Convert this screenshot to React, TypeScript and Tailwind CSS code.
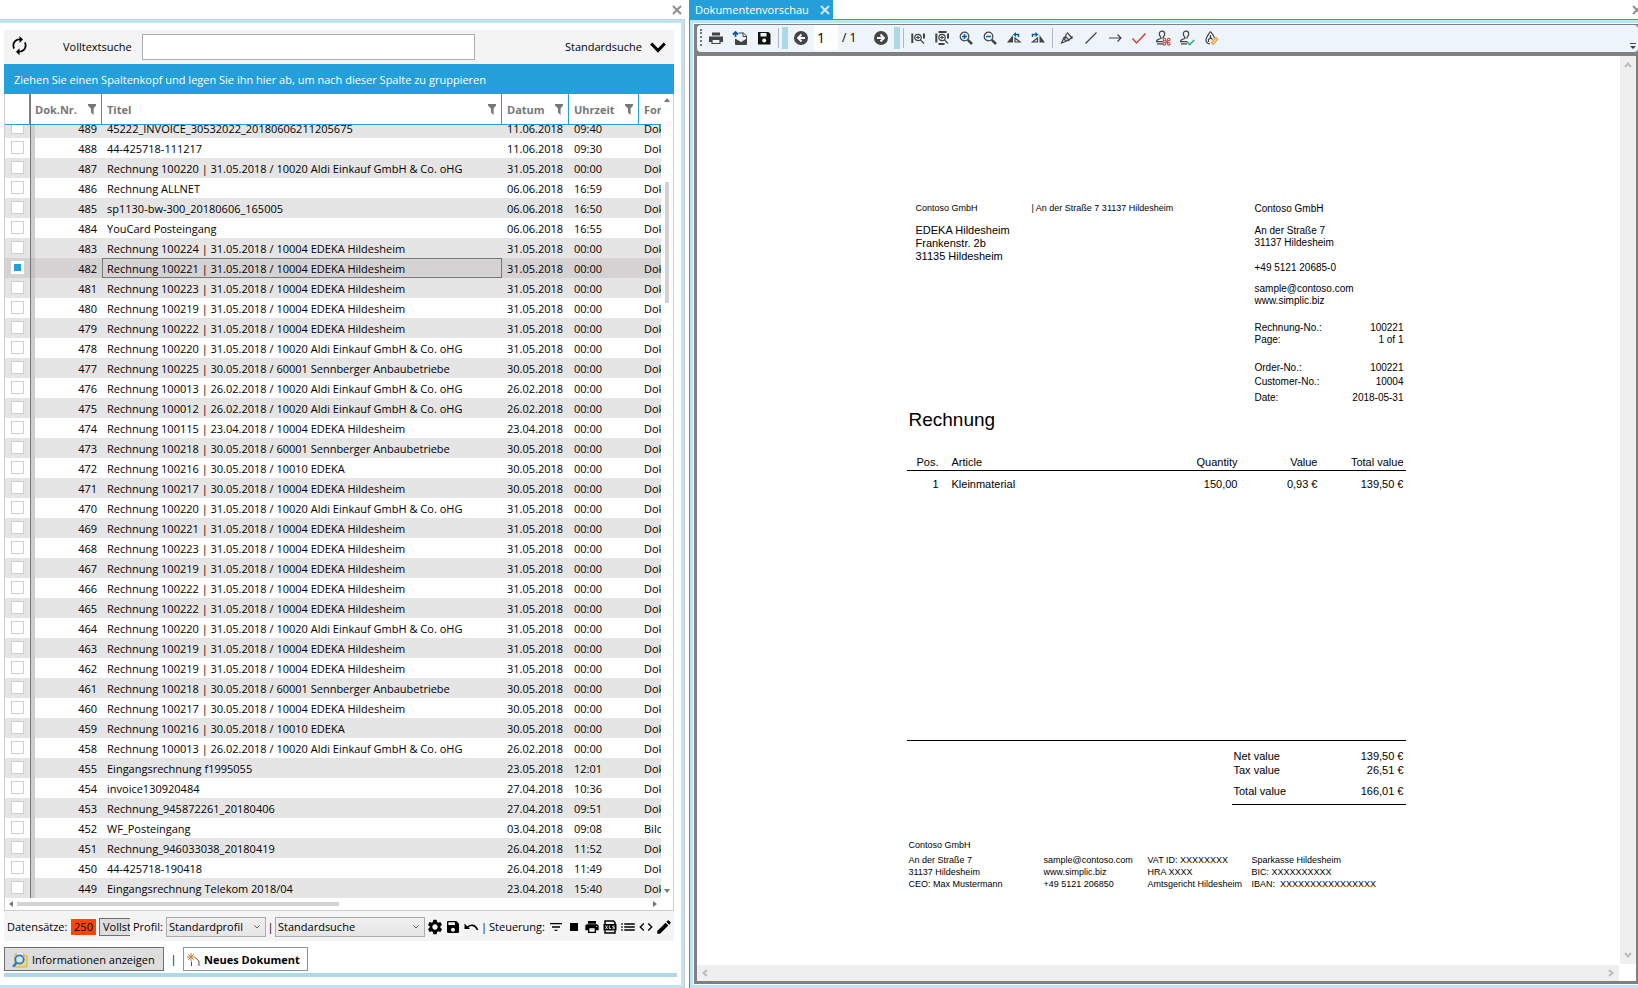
import { useLayoutEffect, useRef, type ReactNode } from "react";
import {
  MdAutorenew,
  MdCode,
  MdEdit,
  MdFilterList,
  MdList,
  MdPrint,
  MdSave,
  MdSettings,
  MdStop,
} from "react-icons/md";

type Row = { nr: number; title: string; date: string; time: string; form: string };

const row = (nr: number, title: string, date: string, time = "00:00", form = "Dok"): Row => ({
  nr,
  title,
  date,
  time,
  form,
});

const rows: Row[] = [
  row(489, "45222_INVOICE_30532022_20180606211205675", "11.06.2018", "09:40"),
  row(488, "44-425718-111217", "11.06.2018", "09:30"),
  row(487, "Rechnung 100220 | 31.05.2018 / 10020 Aldi Einkauf GmbH & Co. oHG", "31.05.2018"),
  row(486, "Rechnung ALLNET", "06.06.2018", "16:59"),
  row(485, "sp1130-bw-300_20180606_165005", "06.06.2018", "16:50"),
  row(484, "YouCard Posteingang", "06.06.2018", "16:55"),
  row(483, "Rechnung 100224 | 31.05.2018 / 10004 EDEKA Hildesheim", "31.05.2018"),
  row(482, "Rechnung 100221 | 31.05.2018 / 10004 EDEKA Hildesheim", "31.05.2018"),
  row(481, "Rechnung 100223 | 31.05.2018 / 10004 EDEKA Hildesheim", "31.05.2018"),
  row(480, "Rechnung 100219 | 31.05.2018 / 10004 EDEKA Hildesheim", "31.05.2018"),
  row(479, "Rechnung 100222 | 31.05.2018 / 10004 EDEKA Hildesheim", "31.05.2018"),
  row(478, "Rechnung 100220 | 31.05.2018 / 10020 Aldi Einkauf GmbH & Co. oHG", "31.05.2018"),
  row(477, "Rechnung 100225 | 30.05.2018 / 60001 Sennberger Anbaubetriebe", "30.05.2018"),
  row(476, "Rechnung 100013 | 26.02.2018 / 10020 Aldi Einkauf GmbH & Co. oHG", "26.02.2018"),
  row(475, "Rechnung 100012 | 26.02.2018 / 10020 Aldi Einkauf GmbH & Co. oHG", "26.02.2018"),
  row(474, "Rechnung 100115 | 23.04.2018 / 10004 EDEKA Hildesheim", "23.04.2018"),
  row(473, "Rechnung 100218 | 30.05.2018 / 60001 Sennberger Anbaubetriebe", "30.05.2018"),
  row(472, "Rechnung 100216 | 30.05.2018 / 10010 EDEKA", "30.05.2018"),
  row(471, "Rechnung 100217 | 30.05.2018 / 10004 EDEKA Hildesheim", "30.05.2018"),
  row(470, "Rechnung 100220 | 31.05.2018 / 10020 Aldi Einkauf GmbH & Co. oHG", "31.05.2018"),
  row(469, "Rechnung 100221 | 31.05.2018 / 10004 EDEKA Hildesheim", "31.05.2018"),
  row(468, "Rechnung 100223 | 31.05.2018 / 10004 EDEKA Hildesheim", "31.05.2018"),
  row(467, "Rechnung 100219 | 31.05.2018 / 10004 EDEKA Hildesheim", "31.05.2018"),
  row(466, "Rechnung 100222 | 31.05.2018 / 10004 EDEKA Hildesheim", "31.05.2018"),
  row(465, "Rechnung 100222 | 31.05.2018 / 10004 EDEKA Hildesheim", "31.05.2018"),
  row(464, "Rechnung 100220 | 31.05.2018 / 10020 Aldi Einkauf GmbH & Co. oHG", "31.05.2018"),
  row(463, "Rechnung 100219 | 31.05.2018 / 10004 EDEKA Hildesheim", "31.05.2018"),
  row(462, "Rechnung 100219 | 31.05.2018 / 10004 EDEKA Hildesheim", "31.05.2018"),
  row(461, "Rechnung 100218 | 30.05.2018 / 60001 Sennberger Anbaubetriebe", "30.05.2018"),
  row(460, "Rechnung 100217 | 30.05.2018 / 10004 EDEKA Hildesheim", "30.05.2018"),
  row(459, "Rechnung 100216 | 30.05.2018 / 10010 EDEKA", "30.05.2018"),
  row(458, "Rechnung 100013 | 26.02.2018 / 10020 Aldi Einkauf GmbH & Co. oHG", "26.02.2018"),
  row(455, "Eingangsrechnung f1995055", "23.05.2018", "12:01"),
  row(454, "invoice130920484", "27.04.2018", "10:36"),
  row(453, "Rechnung_945872261_20180406", "27.04.2018", "09:51"),
  row(452, "WF_Posteingang", "03.04.2018", "09:08", "Bild"),
  row(451, "Rechnung_946033038_20180419", "26.04.2018", "11:52"),
  row(450, "44-425718-190418", "26.04.2018", "11:49"),
  row(449, "Eingangsrechnung Telekom 2018/04", "23.04.2018", "15:40"),
];

const SELECTED = 482;

function CloseIcon({ className }: { className: string }) {
  return (
    <svg viewBox="0 0 10 10" className={className} fill="none" stroke="currentColor" strokeWidth="2">
      <path d="M1 1l8 8M9 1L1 9" />
    </svg>
  );
}

function Funnel({ label }: { label: string }) {
  return (
    <button type="button" aria-label={`${label} filtern`} className="shrink-0 text-[#777]">
      <svg viewBox="0 0 8 11" className="h-[11px] w-2" fill="currentColor">
        <path d="M0 0h8v1.5L5.6 4.5V11L3 8.5v-4L0 1.5z" />
      </svg>
    </button>
  );
}

function HeaderCell({ label, pad }: { label: string; pad: string }) {
  return (
    <th className="h-[31px] border-r border-b border-[#259fda] bg-white p-0 text-left font-bold text-[#777]">
      <div className={`flex items-center justify-between ${pad}`}>
        <span className="pt-[2px]">{label}</span>
        <Funnel label={label} />
      </div>
    </th>
  );
}

function DocumentGrid() {
  const scroller = useRef<HTMLDivElement>(null);
  useLayoutEffect(() => {
    if (scroller.current) scroller.current.scrollTop = 7;
  }, []);

  return (
    <div className="flex min-h-0 flex-1 flex-col border-x border-b border-[#d0ced0]">
      <div className="flex min-h-0 flex-1">
        <div ref={scroller} className="min-w-0 flex-1 overflow-hidden">
          <table className="w-full table-fixed border-separate border-spacing-0 text-[11px] leading-4">
            <colgroup>
              <col className="w-[26px]" />
              <col className="w-[71px]" />
              <col />
              <col className="w-[67px]" />
              <col className="w-[70px]" />
              <col className="w-[22px]" />
            </colgroup>
            <thead className="sticky top-0 z-10">
              <tr>
                <th className="border-r border-b border-r-[#777] border-b-[#259fda] bg-white p-0">
                  <div className="h-[30px] border-r border-[#259fda]" />
                </th>
                <HeaderCell label="Dok.Nr." pad="pl-1 pr-[5px]" />
                <HeaderCell label="Titel" pad="pl-[5px] pr-[5px]" />
                <HeaderCell label="Datum" pad="pl-[5px] pr-[5px]" />
                <HeaderCell label="Uhrzeit" pad="pl-[5px] pr-[5px]" />
                <th className="overflow-hidden border-b border-[#259fda] bg-white p-0 pt-[2px] pl-[5px] text-left font-bold text-[#777]">
                  For
                </th>
              </tr>
            </thead>
            <tbody>
              {rows.map((r, i) => {
                const selected = r.nr === SELECTED;
                const bg = selected ? "bg-[#d5d2d4]" : i % 2 === 0 ? "bg-[#e5e5e5]" : "bg-white";
                const strip = selected ? "border-[#c4c1c3]" : "border-[#cfcfcf]";
                return (
                  <tr key={r.nr} className={bg}>
                    <td className="h-5 border-r border-[#777] p-0 pt-[3px] pl-[6px] align-top">
                      <input
                        type="checkbox"
                        aria-label={`Dokument ${r.nr}`}
                        defaultChecked={selected}
                        className="block size-[13px] appearance-none border border-[#d0ced0] bg-white checked:border-[3px] checked:border-white checked:bg-[#259fda]"
                      />
                    </td>
                    <td className={`border-l-4 p-0 pt-[2px] pr-[5px] text-right ${strip}`}>{r.nr}</td>
                    <td
                      className={`truncate p-0 pt-[2px] ${selected ? "border border-[#777] pl-1" : "pl-[5px]"}`}
                    >
                      {r.title}
                    </td>
                    <td className="p-0 pt-[2px] pl-[5px]">{r.date}</td>
                    <td className="p-0 pt-[2px] pl-[5px]">{r.time}</td>
                    <td className="overflow-hidden p-0 pt-[2px] pl-[5px]">{r.form}</td>
                  </tr>
                );
              })}
            </tbody>
          </table>
        </div>
        <div className="flex w-3 flex-col items-center pt-1 pb-[5px] text-[#777]">
          <svg viewBox="0 0 6 4" className="h-1 w-[6px]" fill="currentColor">
            <path d="M3 0l3 4H0z" />
          </svg>
          <div className="mt-20 h-[121px] w-1 bg-[#d5d2d4]" />
          <div className="flex-1" />
          <svg viewBox="0 0 6 4" className="h-1 w-[6px]" fill="currentColor">
            <path d="M3 4L0 0h6z" />
          </svg>
        </div>
      </div>
      <div className="flex h-3 items-center pr-[16px] pl-1 text-[#777]">
        <svg viewBox="0 0 4 6" className="h-[6px] w-1" fill="currentColor">
          <path d="M0 3l4-3v6z" />
        </svg>
        <div className="ml-1 h-1 w-[322px] bg-[#d5d2d4]" />
        <div className="flex-1" />
        <svg viewBox="0 0 4 6" className="h-[6px] w-1" fill="currentColor">
          <path d="M4 3L0 0v6z" />
        </svg>
      </div>
    </div>
  );
}

function Dropdown({ label, value, width }: { label: string; value: string; width: string }) {
  return (
    <div className={`relative h-5 shrink-0 ${width}`}>
      <select
        aria-label={label}
        className="h-5 w-full appearance-none border border-[#acacac] bg-linear-to-b from-[#f0f0f0] to-[#e5e5e5] pl-[2px] text-[11px] leading-4"
      >
        <option>{value}</option>
      </select>
      <svg
        viewBox="0 0 6 4"
        className="pointer-events-none absolute top-2 right-[6px] h-1 w-[6px]"
        fill="none"
        stroke="#606060"
      >
        <path d="M.4.4L3 3 5.6.4" />
      </svg>
    </div>
  );
}

function IconButton({ label, children }: { label: string; children: ReactNode }) {
  return (
    <button
      type="button"
      aria-label={label}
      className="flex h-[18px] w-[18px] shrink-0 items-center justify-center text-[18px] text-black"
    >
      {children}
    </button>
  );
}

function FooterBar() {
  return (
    <div className="flex h-[30px] items-center justify-between bg-[#f4f4f4] pt-[1px] pr-[1px] pl-[3px]">
      <div className="flex items-center">
        <span className="w-16">Datensätze:</span>
        <span className="h-4 w-[25px] bg-[#ff4500] text-center">250</span>
        <button
          type="button"
          className="ml-[3px] h-[18px] w-[31px] overflow-hidden border border-r-0 border-[#707070] bg-[#ddd] pl-[3px] text-left whitespace-nowrap"
        >
          Vollst
        </button>
        <span className="ml-[3px] w-[33px]">Profil:</span>
        <Dropdown label="Profil" value="Standardprofil" width="w-[100px]" />
        <span className="w-[9px] text-center">|</span>
        <Dropdown label="Suche" value="Standardsuche" width="w-[150px]" />
      </div>
      <div className="flex items-center">
        <IconButton label="Einstellungen">
          <MdSettings />
        </IconButton>
        <IconButton label="Speichern">
          <MdSave className="size-4" />
        </IconButton>
        <IconButton label="Rückgängig">
          <svg viewBox="0 0 16 16" className="size-4" fill="none" stroke="currentColor" strokeWidth="1.6">
            <path d="M4.500 8.500C7 5 12.500 5.500 14.500 11" />
            <path d="M1.500 4.500v5.500H7z" fill="currentColor" stroke="none" />
          </svg>
        </IconButton>
        <span className="w-2 text-center">|</span>
        <span className="w-[59px] pl-[1px]">Steuerung:</span>
        <IconButton label="Filter">
          <MdFilterList className="size-4" />
        </IconButton>
        <IconButton label="Stopp">
          <MdStop className="size-4" />
        </IconButton>
        <IconButton label="Drucken">
          <MdPrint className="size-4" />
        </IconButton>
        <IconButton label="Excel-Export">
          <svg viewBox="0 0 14 14" className="size-[14px]" fill="none" stroke="currentColor" strokeWidth="1.500">
            <path d="M2 4V1h8.500L12 2.500V4M2 10.500V13h10v-2.500" />
            <path d="M.5 4h13v6.500H.5z" fill="currentColor" stroke="none" />
            <path
              d="M2.500 5.500l2 3.500M4.500 5.500l-2 3.500M6.300 5.500v3h1.700M11.500 6H9.800v1.200h1.500V8.700H9.500"
              stroke="#f4f4f4"
              strokeWidth=".9"
            />
          </svg>
        </IconButton>
        <IconButton label="Liste">
          <MdList />
        </IconButton>
        <IconButton label="Quelltext">
          <MdCode className="size-4" />
        </IconButton>
        <IconButton label="Bearbeiten">
          <MdEdit />
        </IconButton>
      </div>
    </div>
  );
}

function SearchPanel() {
  return (
    <section className="flex min-h-0 min-w-0 flex-col pr-1">
      <div className="flex h-[19px] items-center justify-end pr-[3px] text-[#8f8f8f]">
        <button type="button" aria-label="Suche schließen">
          <CloseIcon className="size-[10px]" />
        </button>
      </div>
      <div className="flex min-h-0 flex-1 flex-col border-t border-r border-[#d0d0d0]">
        <div className="flex min-h-0 flex-1 flex-col border-t-[3px] border-r-[3px] border-b-[3px] border-[#bee3f4] pt-[7px] pr-1 pb-2 pl-1">
          <div className="mr-[3px] flex min-h-0 flex-1 flex-col">
            <div className="flex h-[34px] shrink-0 items-center bg-[#f4f4f4] pr-2 pl-[5px]">
              <button type="button" aria-label="Aktualisieren" className="-mt-1">
                <MdAutorenew className="size-[21px]" />
              </button>
              <label htmlFor="fulltext" className="ml-[33px] w-[79px]">
                Volltextsuche
              </label>
              <input id="fulltext" className="h-[26px] w-[333px] border border-[#abadb3] bg-white px-1" />
              <button type="button" className="ml-auto flex items-center gap-2">
                <span>Standardsuche</span>
                <svg viewBox="0 0 16 11" className="h-[11px] w-4" fill="none" stroke="#000" strokeWidth="3">
                  <path d="M1.200 1.500L8 8.500l6.800-7" />
                </svg>
              </button>
            </div>
            <div className="flex h-[30px] shrink-0 items-center bg-[#259fda] pt-[1px] pl-[10px] text-white">
              Ziehen Sie einen Spaltenkopf und legen Sie ihn hier ab, um nach dieser Spalte zu gruppieren
            </div>
            <DocumentGrid />
            <FooterBar />
            <div className="mt-[6px] flex h-[24px] shrink-0 items-center">
              <button
                type="button"
                className="flex h-[24px] w-40 items-center gap-1 border border-[#707070] bg-[#ddd] pt-px pl-[7px]"
              >
                <svg viewBox="0 0 16 16" className="size-4 shrink-0">
                  <path d="M3 2h9v2h3v11H3z" fill="#f3d67a" stroke="#d9ae45" />
                  <path d="M5 1h6v6H5z" fill="#fff4c8" />
                  <circle cx="7.500" cy="7.500" r="4.200" fill="#cfeaff" stroke="#2878c4" strokeWidth="1.800" />
                  <path d="M4.500 10.800L1 14.800" stroke="#2878c4" strokeWidth="2.400" />
                </svg>
                <span className="whitespace-nowrap">Informationen anzeigen</span>
              </button>
              <span className="w-[19px] text-center">|</span>
              <button
                type="button"
                className="flex h-[24px] w-[125px] items-center gap-1 border border-[#8197a8] bg-white pt-px pl-[3px] font-bold"
              >
                <svg viewBox="0 0 13 14" className="h-[14px] w-[13px] shrink-0" fill="none">
                  <path d="M4 0v8M0 4h8M1.200 1.200l5.600 5.600M6.800 1.200L1.200 6.800" stroke="#c77d28" />
                  <path d="M4.500 8.500V13M8 4.500l4 3.500V13" stroke="#555" />
                </svg>
                <span className="whitespace-nowrap">Neues Dokument</span>
              </button>
            </div>
          </div>
          <div className="mt-[2px] h-1 shrink-0 bg-[#add8e6]" />
        </div>
      </div>
    </section>
  );
}

function Tool({ label, children }: { label: string; children: ReactNode }) {
  return (
    <button type="button" aria-label={label} className="flex h-6 w-6 shrink-0 items-center justify-center">
      <svg viewBox="0 0 16 16" className="size-4" fill="none" stroke="#444" strokeWidth="1.200">
        {children}
      </svg>
    </button>
  );
}

function Separator() {
  return <div className="h-5 w-px bg-[#b4b9c0]" />;
}

function ViewerToolbar() {
  const stamp =
    "M6.200 8.500c0-1.500-1.900-2.500-1.900-4.600a2.700 2.700 0 015.400 0c0 2.100-1.900 3.100-1.900 4.600M6.200 8.500c-2.500.6-4.700.5-4.700 3.200h7M2 13.800h6";
  return (
    <div className="flex h-[27px] shrink-0 items-center rounded-l-sm rounded-r-sm bg-[#edf4fc] pb-[2px]">
      <div className="ml-[3px] h-[17px] border-l-2 border-dotted border-[#777]" />
      <div className="ml-[2px] flex">
        <Tool label="Drucken">
          <path d="M4 2.500h8v3H4z" fill="#444" stroke="none" />
          <path d="M1 6.500h14V12H1z" fill="#444" stroke="none" />
          <path d="M4 9.500h8v4H4z" fill="#edf4fc" />
        </Tool>
        <Tool label="Exportieren">
          <path d="M6.500 3h5l3 3v8.500h-11V9" strokeWidth="1" />
          <path d="M11 2.500v4h4" strokeWidth="1" />
          <path d="M4 9l5 3 5-3v5H4z" fill="#444" stroke="none" />
          <path d="M3.500 7V2M1 4.500L3.500 2 6 4.500" stroke="#0b5cab" strokeWidth="1.800" />
        </Tool>
        <Tool label="Speichern">
          <path d="M2 2h10.500L14.500 4v10.500H2z" fill="#111" stroke="none" />
          <path d="M4.500 3h6v3.500h-6z" fill="#edf4fc" stroke="none" />
          <circle cx="8.200" cy="10.500" r="2" fill="#edf4fc" stroke="none" />
        </Tool>
      </div>
      <div className="ml-[2px]">
        <Separator />
      </div>
      <div className="ml-[3px] h-[22px] w-[6px] bg-[#add8e6]" />
      <div className="ml-[1px] flex">
        <Tool label="Vorherige Seite">
          <circle cx="8" cy="8" r="7" fill="#444" stroke="none" />
          <path d="M12 8H5.500M8.500 4.500L5 8l3.500 3.500" stroke="#fff" strokeWidth="1.800" />
        </Tool>
      </div>
      <input
        aria-label="Seite"
        defaultValue="1"
        className="ml-[1px] h-[25px] w-6 bg-white px-[3px] text-sm leading-5"
      />
      <span className="w-[31px] pl-1 text-xs">/ 1</span>
      <div className="flex">
        <Tool label="Nächste Seite">
          <circle cx="8" cy="8" r="7" fill="#444" stroke="none" />
          <path d="M4 8h6.500M7.500 4.500L11 8l-3.500 3.500" stroke="#fff" strokeWidth="1.800" />
        </Tool>
      </div>
      <div className="ml-[1px] h-[22px] w-[6px] bg-[#add8e6]" />
      <div className="mr-[2px] ml-[3px]">
        <Separator />
      </div>
      <div className="flex">
        <Tool label="Seitenbreite">
          <path d="M2.300 3.500v9.500M14 3.500v5" strokeWidth="2" />
          <circle cx="8" cy="7.500" r="3.200" />
          <path d="M6.200 7.500h3.600M8 5.700v3.600M10.500 10l3.500 3.500" />
        </Tool>
        <Tool label="Ganze Seite">
          <path d="M2.300 3.500v9M14 3.500v5" strokeWidth="2" />
          <path d="M4.500 2h8M4.500 14h6" strokeWidth="2" />
          <circle cx="8" cy="7.500" r="3.200" />
          <path d="M6.200 7.500h3.600M8 5.700v3.600M10.500 10l3.500 3.500" />
        </Tool>
        <Tool label="Vergrößern">
          <circle cx="6.500" cy="6.500" r="4.300" />
          <path d="M4 6.500h5M6.500 4v5" stroke="#0b5cab" strokeWidth="1.500" />
          <path d="M9.800 9.800L14 14" strokeWidth="2.500" />
        </Tool>
        <Tool label="Verkleinern">
          <circle cx="6.500" cy="6.500" r="4.300" />
          <path d="M4 6.500h5" stroke="#0b5cab" strokeWidth="1.500" />
          <path d="M9.800 9.800L14 14" strokeWidth="2.500" />
        </Tool>
        <Tool label="Nach links drehen">
          <path d="M7 5v7.500H1z" fill="#444" stroke="none" />
          <path d="M9 8v4h5z" />
          <path d="M12.500 7V4.500H8.500" stroke="#0b5cab" strokeWidth="1.500" />
          <path d="M10 2v5L7 4.500z" fill="#0b5cab" stroke="none" />
        </Tool>
        <Tool label="Nach rechts drehen">
          <path d="M9.500 5v7.500H15z" fill="#444" stroke="none" />
          <path d="M7.500 8v4h-5z" />
          <path d="M2.500 7V4.500H6" stroke="#0b5cab" strokeWidth="1.500" />
          <path d="M5.500 2v5l3-2.500z" fill="#0b5cab" stroke="none" />
        </Tool>
      </div>
      <div className="mr-[2px] ml-[2px]">
        <Separator />
      </div>
      <div className="flex">
        <Tool label="Textmarker">
          <path d="M8 2.500l5.500 6M13.500 6.500L9.500 10.500 5.500 10 7.500 3.500M5.500 6.500L2.500 13 8 11M7 7l3 3" />
        </Tool>
        <Tool label="Linie">
          <path d="M2.500 13.500l11-11" />
        </Tool>
        <Tool label="Pfeil">
          <path d="M2 8h12M10.500 4.500L14 8l-3.500 3.500" />
        </Tool>
        <Tool label="Haken">
          <path d="M1.500 8.500L5.500 13l9-9.500" stroke="#cf3f35" strokeWidth="1.500" />
        </Tool>
        <Tool label="Stempel ablehnen">
          <path d={stamp} />
          <g fill="#edf4fc" stroke="#d2453c" strokeWidth="1.100">
            <path d="M10 10l3.500 3.500M13.500 10L10 13.500" />
            <circle cx="9.500" cy="9.500" r="1.300" />
            <circle cx="13.800" cy="9.500" r="1.300" />
            <circle cx="9.500" cy="13.800" r="1.300" />
            <circle cx="13.800" cy="13.800" r="1.300" />
          </g>
        </Tool>
        <Tool label="Stempel genehmigen">
          <path d={stamp} />
          <path d="M8.500 12l2.200 2.500 4.500-4.500" stroke="#35b277" strokeWidth="1.600" />
        </Tool>
        <Tool label="Unterschrift">
          <path d="M7.500 1.500C5 5 3 7 3 10c0 2 1.500 3.500 4 4M7.500 1.500c2 2.500 3.500 4 4 6.500M7.500 5v4M5.500 12V9.500l2-2 2 2" />
          <path d="M8.800 14l5.400-6" stroke="#e9a12b" strokeWidth="3.600" />
          <path d="M9.500 13.200l4-4.400" stroke="#fbe3b3" strokeWidth="1.100" />
        </Tool>
      </div>
      <div className="mt-[17px] mr-[2px] ml-auto">
        <svg viewBox="0 0 6 6" className="size-[6px]" fill="#444">
          <path d="M0 0h6v1H0zM0 3h6L3 6z" />
        </svg>
      </div>
    </div>
  );
}

const article = [{ pos: "1", name: "Kleinmaterial", quantity: "150,00", value: "0,93 €", total: "139,50 €" }];

function Pair({ label, value, gap }: { label: string; value: string; gap: string }) {
  return (
    <div className={`flex justify-between ${gap}`}>
      <span>{label}</span>
      <span>{value}</span>
    </div>
  );
}

function Invoice() {
  return (
    <article className="flex w-[499px] flex-col pt-[146px] font-['Liberation_Sans',Arial,sans-serif] text-[11px] leading-[14px] text-black">
      <div className="flex justify-between pr-[2px] pl-[9px]">
        <div>
          <div className="flex text-[9px] leading-3">
            <span className="w-[116px]">Contoso GmbH</span>
            <span>| An der Straße 7 31137 Hildesheim</span>
          </div>
          <address className="mt-[10px] leading-[13px] not-italic">
            EDEKA Hildesheim
            <br />
            Frankenstr. 2b
            <br />
            31135 Hildesheim
          </address>
        </div>
        <div className="w-[149px] pt-px text-[10px] leading-3">
          <p>Contoso GmbH</p>
          <p className="mt-[10px]">An der Straße 7</p>
          <p>31137 Hildesheim</p>
          <p className="mt-[13px]">+49 5121 20685-0</p>
          <p className="mt-[9px]">sample@contoso.com</p>
          <p>www.simplic.biz</p>
          <Pair label="Rechnung-No.:" value="100221" gap="mt-[15px]" />
          <Pair label="Page:" value="1 of 1" gap="mt-0" />
          <Pair label="Order-No.:" value="100221" gap="mt-4" />
          <Pair label="Customer-No.:" value="10004" gap="mt-[2px]" />
          <Pair label="Date:" value="2018-05-31" gap="mt-1" />
        </div>
      </div>
      <h1 className="mt-[4px] pl-[2px] text-[19px] leading-6">Rechnung</h1>
      <table className="mt-[22px] w-full table-fixed border-collapse">
        <thead>
          <tr className="border-b border-black">
            <th className="w-[45px] p-0 pr-[13px] text-right font-normal">Pos.</th>
            <th className="p-0 text-left font-normal">Article</th>
            <th className="w-20 p-0 text-right font-normal">Quantity</th>
            <th className="w-20 p-0 text-right font-normal">Value</th>
            <th className="h-4 w-[88px] p-0 pr-[2px] text-right font-normal">Total value</th>
          </tr>
        </thead>
        <tbody>
          {article.map((a) => (
            <tr key={a.pos}>
              <td className="p-0 pt-[6px] pr-[13px] text-right">{a.pos}</td>
              <td className="p-0 pt-[6px]">{a.name}</td>
              <td className="p-0 pt-[6px] text-right">{a.quantity}</td>
              <td className="p-0 pt-[6px] text-right">{a.value}</td>
              <td className="p-0 pt-[6px] pr-[2px] text-right">{a.total}</td>
            </tr>
          ))}
        </tbody>
      </table>
      <div className="mt-[249px] border-t border-black" />
      <div className="ml-auto w-[174px] border-b border-black pt-2 pr-[2px] pb-[6px] pl-[2px]">
        <Pair label="Net value" value="139,50 €" gap="mt-0" />
        <Pair label="Tax value" value="26,51 €" gap="mt-0" />
        <Pair label="Total value" value="166,01 €" gap="mt-[7px]" />
      </div>
      <footer className="mt-[34px] pl-[2px] text-[9px] leading-3">
        <p>Contoso GmbH</p>
        <div className="mt-[3px] flex whitespace-nowrap">
          <p className="w-[135px]">
            An der Straße 7<br />
            31137 Hildesheim
            <br />
            CEO: Max Mustermann
          </p>
          <p className="w-[104px]">
            sample@contoso.com
            <br />
            www.simplic.biz
            <br />
            +49 5121 206850
          </p>
          <p className="w-[104px]">
            VAT ID: XXXXXXXX
            <br />
            HRA XXXX
            <br />
            Amtsgericht Hildesheim
          </p>
          <p>
            Sparkasse Hildesheim
            <br />
            BIC: XXXXXXXXXX
            <br />
            IBAN:&nbsp; XXXXXXXXXXXXXXXX
          </p>
        </div>
      </footer>
    </article>
  );
}

function Chevron({ d, className }: { d: string; className: string }) {
  return (
    <svg viewBox="0 0 8 8" className={className} fill="none" stroke="#bcbcbc" strokeWidth="2">
      <path d={d} />
    </svg>
  );
}

function PreviewPanel() {
  return (
    <section className="flex min-h-0 min-w-0 flex-col">
      <div className="flex h-[19px] items-center justify-between overflow-hidden">
        <div className="flex h-[19px] w-36 items-center justify-between bg-[#259fda] pr-[3px] pl-[6px] text-white">
          <span>Dokumentenvorschau</span>
          <button type="button" aria-label="Dokumentenvorschau schließen" className="text-[#cde9f7]">
            <CloseIcon className="size-[10px]" />
          </button>
        </div>
        <button type="button" aria-label="Vorschau schließen" className="-mr-1 text-[#8f8f8f]">
          <CloseIcon className="size-[10px]" />
        </button>
      </div>
      <div className="flex min-h-0 flex-1 flex-col border-t border-l border-[#259fda]">
        <div className="flex min-h-0 flex-1 flex-col border-t-[3px] border-b-[3px] border-l-[3px] border-[#bee3f4] pt-px pb-px pl-px">
          <div className="flex min-h-0 flex-1 flex-col border-t border-b-[3px] border-l-[3px] border-[#808080] bg-[#808080]">
            <ViewerToolbar />
            <div className="mt-1 mr-[2px] flex min-h-0 flex-1 flex-col bg-white">
              <div className="flex min-h-0 flex-1">
                <div className="flex min-w-0 flex-1 justify-center overflow-hidden pr-[5px]">
                  <Invoice />
                </div>
                <div className="flex w-4 flex-col items-center justify-between bg-[#efefef] py-[5px]">
                  <Chevron d="M1 6l3-3.500L7 6" className="size-2" />
                  <Chevron d="M1 2l3 3.500L7 2" className="size-2" />
                </div>
              </div>
              <div className="mt-px mr-[17px] flex h-4 items-center justify-between bg-[#efefef] px-1">
                <Chevron d="M6 1L2.500 4 6 7" className="size-2" />
                <Chevron d="M2 1l3.500 3L2 7" className="size-2" />
              </div>
            </div>
          </div>
        </div>
      </div>
    </section>
  );
}

export default function App() {
  return (
    <main className="grid h-screen grid-cols-[689fr_949fr] grid-rows-[minmax(0,1fr)] overflow-hidden bg-white font-['Open_Sans','Noto_Sans',sans-serif] text-[11px] leading-4 text-black">
      <SearchPanel />
      <PreviewPanel />
    </main>
  );
}
